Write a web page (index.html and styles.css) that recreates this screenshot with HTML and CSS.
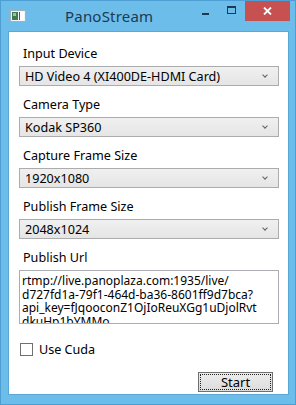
FILE: index.html
```html
<!DOCTYPE html>
<html lang="en">
<head>
  <meta charset="UTF-8">
  <title>PanoStream</title>
  <link rel="stylesheet" href="styles.css">
</head>
<body>

<div class="window">
  <div class="titlebar">
    <svg class="app-icon" width="16" height="12" viewBox="0 0 16 12">
      <rect x="0.5" y="0.5" width="15" height="11" fill="#f4f4f4" stroke="#9fb3bf"/>
      <rect x="2" y="2" width="6" height="8" fill="#3e7a52"/>
      <rect x="3" y="3" width="3" height="3" fill="#8fc7a0"/>
      <rect x="9" y="2" width="5" height="8" fill="#ffffff"/>
      <rect x="9" y="2" width="1" height="8" fill="#556"/>
    </svg>
    <div class="title">PanoStream</div>
    <div class="caption-btn min"><span></span></div>
    <div class="caption-btn max"><span></span></div>
    <div class="caption-btn close">
      <svg width="9" height="8" viewBox="0 0 9 8">
        <path d="M1 0.5 L8 7.5 M8 0.5 L1 7.5" stroke="#fff" stroke-width="1.8"/>
      </svg>
    </div>
  </div>

  <div class="client">
    <div class="field">
      <div class="label">Input Device</div>
      <div class="combo"><span>HD Video 4 (XI400DE-HDMI Card)</span><i class="arrow"></i></div>
    </div>
    <div class="field">
      <div class="label">Camera Type</div>
      <div class="combo"><span>Kodak SP360</span><i class="arrow"></i></div>
    </div>
    <div class="field">
      <div class="label">Capture Frame Size</div>
      <div class="combo"><span>1920x1080</span><i class="arrow"></i></div>
    </div>
    <div class="field">
      <div class="label">Publish Frame Size</div>
      <div class="combo"><span>2048x1024</span><i class="arrow"></i></div>
    </div>
    <div class="field">
      <div class="label">Publish Url</div>
      <div class="textbox">
        <div>rtmp://live.panoplaza.com:1935/live/</div>
        <div>d727fd1a-79f1-464d-ba36-8601ff9d7bca?</div>
        <div>api_key=fJqooconZ1OjIoReuXGg1uDjolRvt</div>
        <div>dkuHp1bYMMo</div>
      </div>
    </div>

    <label class="check">
      <span class="box"></span>
      <span>Use Cuda</span>
    </label>

    <div class="actions">
      <div class="btn"><span>Start</span></div>
    </div>
  </div>
</div>

</body>
</html>
```

FILE: styles.css
```css
html, body {
  margin: 0;
  padding: 0;
}
body {
  width: 296px;
  height: 405px;
  overflow: hidden;
  background: #6cbdea;
  font-family: "Noto Sans", "Open Sans", sans-serif;
}
.window {
  width: 296px;
  height: 405px;
  box-sizing: border-box;
  border: 1px solid #4d9fd3;
  display: flex;
  flex-direction: column;
}
.titlebar {
  height: 30px;
  flex-shrink: 0;
  display: flex;
  align-items: flex-start;
  position: relative;
}
.app-icon {
  margin: 9px 0 0 9px;
}
.title {
  position: absolute;
  left: 64px;
  top: 5px;
  font-size: 15px;
  color: #1d3a52;
  letter-spacing: 0.2px;
}
.caption-btn {
  height: 20px;
  display: flex;
  align-items: center;
  justify-content: center;
}
.min {
  margin-left: auto;
  width: 26px;
}
.min span {
  width: 7px;
  height: 2px;
  margin-top: 6px;
  background: #1d3a52;
}
.max {
  width: 27px;
}
.max span {
  width: 7px;
  height: 5px;
  margin-top: -3px;
  border: 1.5px solid #1d3a52;
  border-top-width: 2px;
}
.close {
  width: 45px;
  margin-right: 5px;
  background: #c75050;
}
.client {
  flex: 1;
  margin: 0 6px 9px 7px;
  background: #fff;
  border: 1px solid #5aa6d6;
  padding: 14px 9px 2px 10px;
  display: flex;
  flex-direction: column;
}
.client > * {
  flex-shrink: 0;
}
.field {
  margin-bottom: 11px;
}
.label {
  font-size: 12.6px;
  line-height: 16px;
  color: #000;
  padding-left: 4px;
  margin-bottom: 4px;
}
.combo {
  height: 20px;
  box-sizing: border-box;
  border: 1px solid #acacac;
  background: linear-gradient(#f0f0f0, #e5e5e5);
  display: flex;
  align-items: center;
  padding: 0 0 0 5px;
  font-size: 12.6px;
  color: #000;
}
.combo span {
  flex: 1;
}
.arrow {
  width: 3px;
  height: 3px;
  border-right: 1px solid #606060;
  border-bottom: 1px solid #606060;
  transform: rotate(45deg);
  margin: -3px 11px 0 0;
}
.textbox {
  height: 54px;
  overflow: hidden;
  box-sizing: border-box;
  border: 1px solid #abadb3;
  padding: 3px 2px 0 2px;
  font-size: 12px;
  line-height: 13.5px;
  color: #000;
  white-space: nowrap;
}
.check {
  display: flex;
  align-items: center;
  gap: 6px;
  font-size: 12.6px;
  margin: 6px 0 0 1px;
}
.box {
  width: 13px;
  height: 13px;
  box-sizing: border-box;
  border: 1px solid #707070;
  background: #fff;
}
.actions {
  display: flex;
  justify-content: flex-end;
  margin-top: auto;
  padding-right: 6px;
}
.btn {
  width: 75px;
  height: 20px;
  box-sizing: border-box;
  border: 1px solid #707070;
  background: linear-gradient(#ececec, #dcdcdc);
  padding: 1px;
}
.btn span {
  display: block;
  height: 100%;
  box-sizing: border-box;
  border: 1px dotted #222;
  text-align: center;
  font-size: 13px;
  line-height: 15px;
  color: #000;
}
```
